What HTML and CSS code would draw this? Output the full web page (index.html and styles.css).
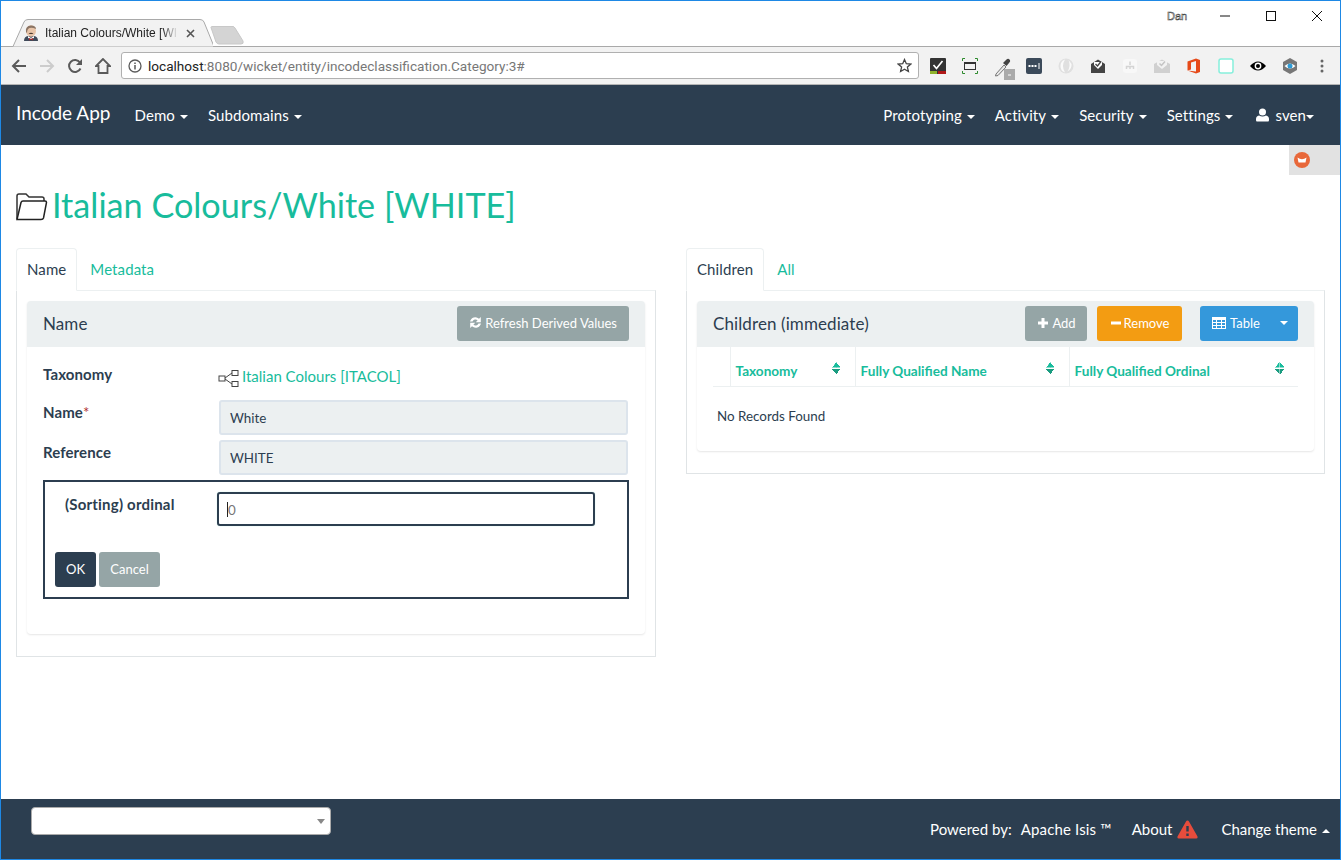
FILE: index.html
```html
<!DOCTYPE html>
<html>
<head>
<title>Italian Colours/White [WHITE]</title>
<link rel="stylesheet" href="styles.css">
</head>
<body>
<div class="window">

	<!-- browser chrome -->
	<div class="tabstrip">
		<div class="browser-tab">
			<svg class="tab-shape" width="206" height="28" viewBox="0 0 206 28"><path d="M0 27.500H6L17 3Q18 .5 21 .5H193Q196 .5 197 3L207 27.500" fill="#f2f2f2" stroke="#a9a9a9"/></svg>
			<svg class="favicon" width="16" height="16" viewBox="0 0 16 16"><path d="M1 16Q1 11 6 11H10Q15 11 15 16Z" fill="#3f4a5a"/><path d="M5 11L8 13L11 11V13L8 14L5 13Z" fill="#fff"/><ellipse cx="8" cy="6" rx="5" ry="5.800" fill="#e8c4a8"/><path d="M3 7Q2 1 8 .5Q13 .5 13 4Q9 2 6.500 3Q4 4 4 8Z" fill="#8a7464"/><path d="M5.500 8.500Q8 7 10.500 8.500Q8 9.500 5.500 8.500Z" fill="#4a3a30"/><path d="M6 13L8 14L10 13V15.500L8 14.500L6 15.500Z" fill="#b02a2a"/></svg>
			<span class="tab-title">Italian Colours/White [WI</span>
			<svg class="tab-close" width="9" height="9" viewBox="0 0 9 9"><path d="M1 1L8 8M8 1L1 8" stroke="#555" stroke-width="1.600"/></svg>
		</div>
		<svg class="new-tab" width="34" height="19" viewBox="0 0 34 19"><path d="M1 1.500Q1 .5 2 .5H23Q24 .5 25 2L33 15Q34 18 31 18H9Q7 18 6 16Z" fill="#d4d4d4" stroke="#c8c8c8"/></svg>
		<span class="win-user">Dan</span>
		<div class="win-controls">
			<svg width="12" height="12" viewBox="0 0 12 12"><path d="M1 6H11" stroke="#111"/></svg>
			<svg width="12" height="12" viewBox="0 0 12 12"><rect x="1.500" y="1.500" width="9" height="9" fill="none" stroke="#111"/></svg>
			<svg width="12" height="12" viewBox="0 0 12 12"><path d="M1 1L11 11M11 1L1 11" stroke="#111"/></svg>
		</div>
	</div>

	<div class="toolbar">
		<svg class="tool-btn" width="16" height="16" viewBox="0 0 16 16"><path d="M15 8H2M8 2L2 8L8 14" fill="none" stroke="#5a5a5a" stroke-width="2"/></svg>
		<svg class="tool-btn" width="16" height="16" viewBox="0 0 16 16"><path d="M1 8H14M8 2L14 8L8 14" fill="none" stroke="#ccc" stroke-width="2"/></svg>
		<svg class="tool-btn" width="16" height="16" viewBox="0 0 16 16"><path d="M13.500 10.500A6 6 0 1 1 13 4.500" fill="none" stroke="#5a5a5a" stroke-width="2"/><path d="M15 1V7H9Z" fill="#5a5a5a"/></svg>
		<svg class="tool-btn" width="16" height="16" viewBox="0 0 16 16"><path d="M8 1L1 8H3.500V15H12.500V8H15Z" fill="none" stroke="#5a5a5a" stroke-width="1.800"/></svg>
		<div class="omnibox">
			<svg width="14" height="14" viewBox="0 0 14 14"><circle cx="7" cy="7" r="6" fill="none" stroke="#5a5a5a" stroke-width="1.300"/><path d="M7 6V10.500M7 3.500V5" stroke="#5a5a5a" stroke-width="1.500"/></svg>
			<span class="url"><span class="url-host">localhost</span>:8080/wicket/entity/incodeclassification.Category:3#</span>
			<svg class="star" width="15" height="15" viewBox="0 0 15 15"><path d="M7.500 1.500L9.300 5.700L13.800 6.100L10.400 9.100L11.400 13.500L7.500 11.200L3.600 13.500L4.600 9.100L1.200 6.100L5.700 5.700Z" fill="none" stroke="#444" stroke-width="1.300"/></svg>
		</div>
		<div class="extensions">
			<svg width="16" height="16" viewBox="0 0 16 16"><rect width="16" height="16" rx="1" fill="#333"/><rect y="13" width="7" height="3" fill="#8fb32c"/><rect x="8" y="13" width="8" height="3" fill="#b01818"/><path d="M3.500 7L6.500 10.500L12.500 3" fill="none" stroke="#fff" stroke-width="1.700"/></svg>
			<svg width="16" height="16" viewBox="0 0 16 16"><rect x="2.500" y="4.500" width="11" height="7" fill="none" stroke="#333"/><path d="M2.500 5.500H13.500" stroke="#333"/><path d="M.5 3V.5H3M13 .5H15.500V3M.5 13V15.500H3M13 15.500H15.500V13" fill="none" stroke="#2e8b2e"/></svg>
			<svg class="ext-drop" width="22" height="22" viewBox="0 0 22 22"><path d="M2 16L10 7L12 9L4 17.500L1.500 18Z" fill="#e8e8e8" stroke="#777"/><path d="M9 5L12 2Q14 0 15.500 1.500Q17 3 15 5L12.500 8Z" fill="#444"/><rect x="10" y="11" width="11" height="11" fill="#aaa"/><path d="M14 17H17" stroke="#fff"/></svg>
			<svg width="16" height="16" viewBox="0 0 16 16"><rect width="16" height="16" rx="2" fill="#3b4a5a"/><path d="M2.500 8H10.500" stroke="#fff" stroke-width="2" stroke-dasharray="2 1"/><path d="M13 5V11" stroke="#fff"/></svg>
			<svg width="16" height="16" viewBox="0 0 16 16"><circle cx="8" cy="8" r="7.500" fill="#e0e0e0"/><path d="M7 1.500Q3 8 7 14.500Q2.500 13 2.500 8Q2.500 3 7 1.500ZM10.500 2Q13 8 9.500 13.500Q14 11 13.500 6Z" fill="#fafafa"/></svg>
			<svg width="16" height="16" viewBox="0 0 16 16"><path d="M1 6L8 1.500L15 6V15H1Z" fill="#444"/><path d="M4 7L8 11L12 7V4H4Z" fill="#fff"/><path d="M5.500 6L7.500 8L11 3.500" fill="none" stroke="#444" stroke-width="1.300"/></svg>
			<svg width="16" height="16" viewBox="0 0 16 16"><rect x="1" y="1" width="14" height="14" rx="3" fill="#f8f8f8"/><path d="M8 3.500V7M4.500 11V8.500H11.500V11M8 8V11" fill="none" stroke="#d4d4d4" stroke-width="1.500"/></svg>
			<svg width="16" height="16" viewBox="0 0 16 16"><path d="M0 6L8 1.500L16 6V15H0Z" fill="#d0d0d0"/><path d="M3 7L8 11L13 7V3H3Z" fill="#f2f2f2"/><path d="M5.500 5.500L7.500 7.500L11 3.500" fill="none" stroke="#c4c4c4" stroke-width="1.500"/></svg>
			<svg width="16" height="16" viewBox="0 0 16 16"><path d="M1.500 3.500L10 .5L14 2V14L10 15.500L1.500 12.500L10 13.500V3L5 4.500V11.500L1.500 12.500Z" fill="#e64a19"/></svg>
			<svg width="16" height="16" viewBox="0 0 16 16"><rect x="1" y="1" width="14" height="14" rx="2" fill="#fff" stroke="#86efdc" stroke-width="1.500"/></svg>
			<svg width="16" height="16" viewBox="0 0 16 16"><path d="M0 8Q8 -1 16 8Q8 17 0 8Z" fill="#000"/><circle cx="8" cy="8" r="3.400" fill="#fff"/><circle cx="8" cy="8" r="2" fill="#000"/></svg>
			<svg width="16" height="16" viewBox="0 0 16 16"><path d="M8 0L15 4V12L8 16L1 12V4Z" fill="#777"/><path d="M2.500 8Q8 3 13.500 8Q8 13 2.500 8Z" fill="#fff"/><circle cx="8" cy="8" r="2.500" fill="#2e9bd6"/></svg>
		</div>
		<svg class="menu-dots" width="4" height="14" viewBox="0 0 4 14"><circle cx="2" cy="2" r="1.500" fill="#666"/><circle cx="2" cy="7" r="1.500" fill="#666"/><circle cx="2" cy="12" r="1.500" fill="#666"/></svg>
	</div>

	<!-- app header -->
	<nav class="navbar">
		<a class="brand">Incode App</a>
		<a class="nav-link">Demo<span class="caret"></span></a>
		<a class="nav-link">Subdomains<span class="caret"></span></a>
		<div class="nav-right">
			<a class="nav-link">Prototyping<span class="caret"></span></a>
			<a class="nav-link">Activity<span class="caret"></span></a>
			<a class="nav-link">Security<span class="caret"></span></a>
			<a class="nav-link">Settings<span class="caret"></span></a>
			<a class="nav-link nav-user">
				<svg width="13" height="14" viewBox="0 0 13 14"><circle cx="6.500" cy="4" r="3.500" fill="#fff"/><path d="M1 13.500Q0 13.500 0 12V11Q0 8 3 7.500Q6.500 9.500 10 7.500Q13 8 13 11V12Q13 13.500 12 13.500Z" fill="#fff"/></svg>
				sven<span class="caret caret-tight"></span>
			</a>
		</div>
	</nav>

	<div class="content">
		<div class="debug-tab">
			<svg width="16" height="16" viewBox="0 0 16 16"><circle cx="8" cy="8" r="8" fill="#e8683a"/><path d="M3.500 5.500L4.500 10.500H11.500L12.500 5.500Q8 9 3.500 5.500Z" fill="#fff"/></svg>
		</div>

		<h1 class="page-title">
			<svg width="33" height="29" viewBox="0 0 33 29"><path d="M2 27V4Q2 2 4 2H11L14 5H27Q29 5 29 7V9" fill="none" stroke="#333" stroke-width="1.500"/><path d="M2 27.500H26Q28 27.500 28.500 26L31.500 10.500Q31.500 9 30 9H8Q6.500 9 6 10.500Z" fill="#fff" stroke="#222" stroke-width="1.500"/></svg>
			<span>Italian Colours/White [WHITE]</span>
		</h1>

		<div class="columns">
			<section class="column">
				<ul class="tabs">
					<li class="tab active">Name</li>
					<li class="tab">Metadata</li>
				</ul>
				<div class="tab-pane">
					<div class="panel">
						<div class="panel-heading">
							<span class="panel-title">Name</span>
							<a class="btn btn-grey btn-refresh">
								<svg width="13" height="13" viewBox="0 0 13 13"><path d="M1 5.500A5.500 5.500 0 0 1 10 2.700L11.800 1V6.200H6.800L8.600 4.300A3.200 3.200 0 0 0 3.500 5.500ZM12 7.500A5.500 5.500 0 0 1 3 10.300L1.200 12V6.800H6.200L4.400 8.700A3.200 3.200 0 0 0 9.500 7.500Z" fill="#fff"/></svg>
								Refresh Derived Values
							</a>
						</div>
						<div class="panel-body">
							<div class="form-row form-row-ref">
								<label class="field-label">Taxonomy</label>
								<div class="field-ref">
									<svg width="22" height="18" viewBox="0 0 22 18"><rect x="1" y="7" width="6" height="5" fill="none" stroke="#444"/><rect x="14" y="1.500" width="6" height="5" fill="none" stroke="#444"/><rect x="14" y="12.500" width="6" height="5" fill="none" stroke="#444"/><path d="M7 9L14 4M7 10L14 15" stroke="#444"/></svg>
									<a class="link">Italian Colours [ITACOL]</a>
								</div>
							</div>
							<div class="form-row">
								<label class="field-label">Name<span class="required">*</span></label>
								<div class="input input-disabled">White</div>
							</div>
							<div class="form-row">
								<label class="field-label">Reference</label>
								<div class="input input-disabled">WHITE</div>
							</div>
							<div class="edit-box">
								<div class="edit-row">
									<label class="field-label">(Sorting) ordinal</label>
									<div class="input input-focus"><span class="cursor"></span>0</div>
								</div>
								<div class="edit-actions">
									<a class="btn btn-dark">OK</a>
									<a class="btn btn-grey btn-cancel">Cancel</a>
								</div>
							</div>
						</div>
					</div>
				</div>
			</section>

			<section class="column">
				<ul class="tabs">
					<li class="tab active">Children</li>
					<li class="tab">All</li>
				</ul>
				<div class="tab-pane">
					<div class="panel panel-children">
						<div class="panel-heading">
							<span class="panel-title">Children (immediate)</span>
							<a class="btn btn-grey btn-add">
								<svg width="10" height="10" viewBox="0 0 10 10"><path d="M3.500 0H6.500V3.500H10V6.500H6.500V10H3.500V6.500H0V3.500H3.500Z" fill="#fff"/></svg>
								Add
							</a>
							<a class="btn btn-orange">
								<svg width="10" height="10" viewBox="0 0 10 10"><path d="M0 3.500H10V6.500H0Z" fill="#fff"/></svg>
								Remove
							</a>
							<a class="btn btn-blue">
								<svg width="14" height="12" viewBox="0 0 14 12"><path d="M0 0H14V12H0ZM1 3V5H4V3ZM5 3V5H9V3ZM10 3V5H13V3ZM1 6V8H4V6ZM5 6V8H9V6ZM10 6V8H13V6ZM1 9V11H4V9ZM5 9V11H9V9ZM10 9V11H13V9Z" fill="#fff" fill-rule="evenodd"/></svg>
								<span class="btn-table-label">Table</span>
								<span class="caret"></span>
							</a>
						</div>
						<div class="panel-table">
							<table class="grid">
								<thead>
									<tr>
										<th class="col-blank"></th>
										<th class="col-tax">Taxonomy<span class="sort"></span></th>
										<th class="col-name">Fully Qualified Name<span class="sort"></span></th>
										<th class="col-ord">Fully Qualified Ordinal<span class="sort"></span></th>
									</tr>
								</thead>
							</table>
							<p class="no-records">No Records Found</p>
						</div>
					</div>
				</div>
			</section>
		</div>
	</div>

	<footer class="footer">
		<div class="theme-select"><span class="select-arrow"></span></div>
		<div class="footer-right">
			<span>Powered by:</span>
			<a class="footer-isis">Apache Isis &trade;</a>
			<a class="footer-about">About
				<svg width="21" height="19" viewBox="0 0 21 19"><path d="M10.500 .5Q11.500 .5 12 1.500L20.500 16.500Q21 18.500 19.500 18.500H1.500Q0 18.500 .5 16.500L9 1.500Q9.500 .5 10.500 .5Z" fill="#e74c3c"/><path d="M10.500 6V11.500M10.500 13.500V16" stroke="#2c3e50" stroke-width="2.400"/></svg>
			</a>
			<a class="footer-theme">Change theme<span class="caret caret-up"></span></a>
		</div>
	</footer>
</div>
</body>
</html>
```

FILE: styles.css
```css
* { box-sizing: border-box; }

html, body { margin: 0; padding: 0; }

body {
	font-family: "Lato", "Liberation Sans", sans-serif;
	font-size: 15px;
	color: #2c3e50;
	background: #fff;
}

.window {
	position: relative;
	width: 1341px;
	height: 860px;
	border: 1px solid #1e88e5;
	display: flex;
	flex-direction: column;
	overflow: hidden;
}

/* browser chrome */
.tabstrip {
	height: 46px;
	display: flex;
	align-items: flex-end;
	position: relative;
	border-bottom: 1px solid #a9a9a9;
	flex: none;
}

.browser-tab {
	position: absolute;
	left: 6px;
	top: 18px;
	width: 206px;
	height: 28px;
	display: flex;
	align-items: center;
	padding: 0 0 0 16px;
	font-size: 12px;
	color: #222;
}

.tab-shape { position: absolute; left: 0; top: 0; }

.favicon, .tab-title, .tab-close { position: relative; }

/* the tab title fades out at the end, chrome style */
.tab-title {
	margin-left: 6px;
	width: 133px;
	white-space: nowrap;
	font-family: "Liberation Sans", sans-serif;
	-webkit-mask-image: linear-gradient(to right, #000 88%, transparent);
	mask-image: linear-gradient(to right, #000 88%, transparent);
}

.tab-close { margin-left: 8px; }

.new-tab {
	position: absolute;
	left: 209px;
	top: 25px;
}

.win-user {
	position: absolute;
	left: 1166px;
	top: 9px;
	font-family: "Liberation Sans", sans-serif;
	font-size: 11px;
	color: #fff;
	-webkit-text-stroke: .5px #333;
}

.win-controls {
	position: absolute;
	right: 17px;
	top: 9px;
	display: flex;
	gap: 34px;
}

.toolbar {
	height: 38px;
	flex: none;
	background: #f2f2f2;
	border-bottom: 1px solid #b4b4b4;
	display: flex;
	align-items: center;
	padding-left: 10px;
}

.tool-btn { margin-right: 12px; flex: none; }

.omnibox {
	width: 798px;
	height: 27px;
	margin-left: -2px;
	background: #fff;
	border: 1px solid #b0b0b0;
	border-radius: 3px;
	display: flex;
	align-items: center;
	padding: 0 6px 0 6px;
}

.url {
	margin-left: 6px;
	font-family: "Roboto", "Liberation Sans", sans-serif;
	font-size: 13.6px;
	color: #777;
	flex: 1;
}

.url-host { color: #222; }

.extensions {
	display: flex;
	align-items: center;
	gap: 16px;
	margin-left: 11px;
}

.ext-drop { margin-right: -6px; margin-top: 6px; }

.menu-dots { margin-left: 22px; }

/* navbar */
.navbar {
	height: 60px;
	flex: none;
	background: #2c3e50;
	display: flex;
	align-items: center;
	padding: 0 26px 0 15px;
	color: #fff;
}

.brand {
	font-size: 19px;
	margin-right: 24px;
	position: relative;
	top: -3px;
}

.nav-link {
	font-size: 15px;
	margin-right: 20px;
	white-space: nowrap;
	letter-spacing: .1px;
}

.nav-right {
	margin-left: auto;
	display: flex;
	align-items: center;
}

.nav-right .nav-link:last-child { margin: 0 0 0 3px; }

.nav-user svg { margin-right: 2px; vertical-align: -1px; }

.caret {
	display: inline-block;
	width: 0;
	height: 0;
	margin-left: 5px;
	vertical-align: 2px;
	border-top: 4px solid #fff;
	border-left: 4px solid transparent;
	border-right: 4px solid transparent;
}

.caret-tight { margin-left: 0; }

.caret-up {
	border-top: 0;
	border-bottom: 4px solid #fff;
}

/* content */
.content {
	flex: 1;
	position: relative;
	padding: 0 15px;
}

.debug-tab {
	position: absolute;
	right: 0;
	top: 0;
	width: 51px;
	height: 30px;
	background: #e2e2e2;
	padding: 7px 0 0 5px;
}

.page-title {
	margin: 0;
	padding-top: 40px;
	height: 103px;
	display: flex;
	align-items: flex-start;
	font-size: 34.2px;
	font-weight: 400;
	line-height: 40px;
	color: #18bc9c;
}

.page-title svg {
	flex: none;
	margin: 7px 4px 0 -1px;
}

.columns {
	display: grid;
	grid-template-columns: 640px 639px;
	column-gap: 30px;
}

.tabs {
	list-style: none;
	margin: 0;
	padding: 0;
	display: flex;
	height: 42px;
}

.tab {
	padding: 11px 10px 0;
	height: 43px;
	margin-right: 2px;
	color: #18bc9c;
	border: 1px solid transparent;
	letter-spacing: .1px;
}

.tab.active {
	color: #2c3e50;
	background: #fff;
	border-color: #ecf0f1;
	border-bottom-color: #fff;
	border-radius: 4px 4px 0 0;
	position: relative;
	z-index: 1;
}

.tab-pane {
	border: 1px solid #e0e4e6;
	border-top-color: #ecf0f1;
	padding: 10px 10px 22px;
}

.panel {
	border-radius: 4px;
	box-shadow: 0 1px 2px rgba(0, 0, 0, .1);
	height: 333px;
}

.panel-children { height: 150px; }

.panel-heading {
	height: 46px;
	background: #ecf0f1;
	border-radius: 4px 4px 0 0;
	display: flex;
	align-items: flex-start;
	padding: 5px 16px 0;
}

.panel-title {
	font-size: 17px;
	flex: 1;
	line-height: 35px;
	letter-spacing: .1px;
}

.btn {
	display: inline-flex;
	align-items: center;
	justify-content: center;
	height: 35px;
	padding: 0 11px 2px;
	border-radius: 3px;
	color: #fff;
	font-size: 13px;
	white-space: nowrap;
}

.btn svg { margin-right: 3px; }

.btn-grey { background: #95a5a6; }
.btn-dark { background: #2c3e50; width: 41px; }
.btn-refresh { padding: 0 12px 2px; }
.btn-cancel { width: 61px; }
.btn-orange { background: #f39c12; margin-left: 10px; width: 85px; padding: 0 0 2px 1px; }
.btn-blue {
	background: #3498db;
	margin-left: 18px;
	width: 98px;
	padding: 0 10px 2px 12px;
	justify-content: flex-start;
}

.btn-add { width: 62px; padding: 0 0 2px 2px; }
.btn-add svg { margin-right: 4px; }

.btn-table-label { margin-left: 1px; flex: 1; }

.panel-body { padding: 16px 16px 0; }

.form-row {
	display: flex;
	height: 40px;
}

.form-row-ref { height: 37px; }

.field-label {
	width: 176px;
	flex: none;
	font-weight: 700;
	padding-top: 3px;
	letter-spacing: .1px;
}

.form-row-ref .field-label { padding-top: 2px; }

.required { color: #b03030; font-weight: 400; }

.field-ref {
	display: flex;
	align-items: flex-start;
	padding-top: 4px;
}

.field-ref svg { margin: 2px 2px 0 -1px; }

.link { color: #18bc9c; }

.input {
	height: 35px;
	width: 409px;
	padding: 0 9px;
	display: flex;
	align-items: center;
	font-size: 13.4px;
	border-radius: 3px;
}

.input-disabled {
	background: #ecf0f1;
	border: 2px solid #dce4ec;
}

.edit-box {
	border: 2px solid #2c3e50;
	height: 119px;
	padding: 10px 10px 0 20px;
}

.edit-row { display: flex; }

.edit-row .field-label {
	width: 152px;
	letter-spacing: .2px;
}

.input-focus {
	width: 378px;
	height: 34px;
	border: 2px solid #2c3e50;
	box-shadow: 0 0 1px #8ee8d8;
	color: #777;
	padding: 1px 8px 0;
}

.cursor {
	width: 1px;
	height: 15px;
	background: #222;
}

.edit-actions {
	display: flex;
	gap: 3px;
	margin: 26px 0 0 -10px;
}

.panel-table { padding: 0 16px; }

.grid {
	width: 100%;
	border-collapse: collapse;
	table-layout: fixed;
}

.grid th {
	height: 39px;
	padding: 9px 5px 0;
	text-align: left;
	font-size: 13.6px;
	font-weight: 700;
	color: #18bc9c;
	border-bottom: 1px solid #ecf0f1;
	border-left: 1px solid #ecf0f1;
	position: relative;
}

.grid th.col-blank { width: 17px; border-left: 0; }
.grid th.col-tax { width: 125px; }
.grid th.col-name { width: 214px; }

.sort {
	position: absolute;
	right: 14px;
	top: 15px;
	width: 9px;
	height: 12px;
	background:
		linear-gradient(to bottom right, transparent 50%, #18bc9c 51%) left top / 4.500px 5.500px no-repeat,
		linear-gradient(to bottom left, transparent 50%, #18bc9c 51%) right top / 4.500px 5.500px no-repeat,
		linear-gradient(to top right, transparent 50%, #1a9c80 51%) left bottom / 4.500px 5.500px no-repeat,
		linear-gradient(to top left, transparent 50%, #1a9c80 51%) right bottom / 4.500px 5.500px no-repeat;
}

.no-records {
	margin: 21px 0 0 4px;
	font-size: 13.4px;
}

/* footer */
.footer {
	height: 60px;
	flex: none;
	background: #2c3e50;
	display: flex;
	color: #fff;
	padding: 8px 10px 0 30px;
}

.theme-select {
	width: 300px;
	height: 28px;
	background: #fff;
	border: 1px solid #aaa;
	border-radius: 4px;
	position: relative;
}

.select-arrow {
	position: absolute;
	right: 5px;
	top: 11px;
	border-top: 5px solid #888;
	border-left: 4px solid transparent;
	border-right: 4px solid transparent;
}

.footer-right {
	margin-left: auto;
	display: flex;
	align-items: center;
	height: 44px;
	font-size: 15px;
}

.footer-isis { margin-left: 9px; letter-spacing: .15px; }
.footer-about { margin-left: 20px; display: flex; align-items: center; gap: 5px; }
.footer-theme { margin-left: 23px; }
```
